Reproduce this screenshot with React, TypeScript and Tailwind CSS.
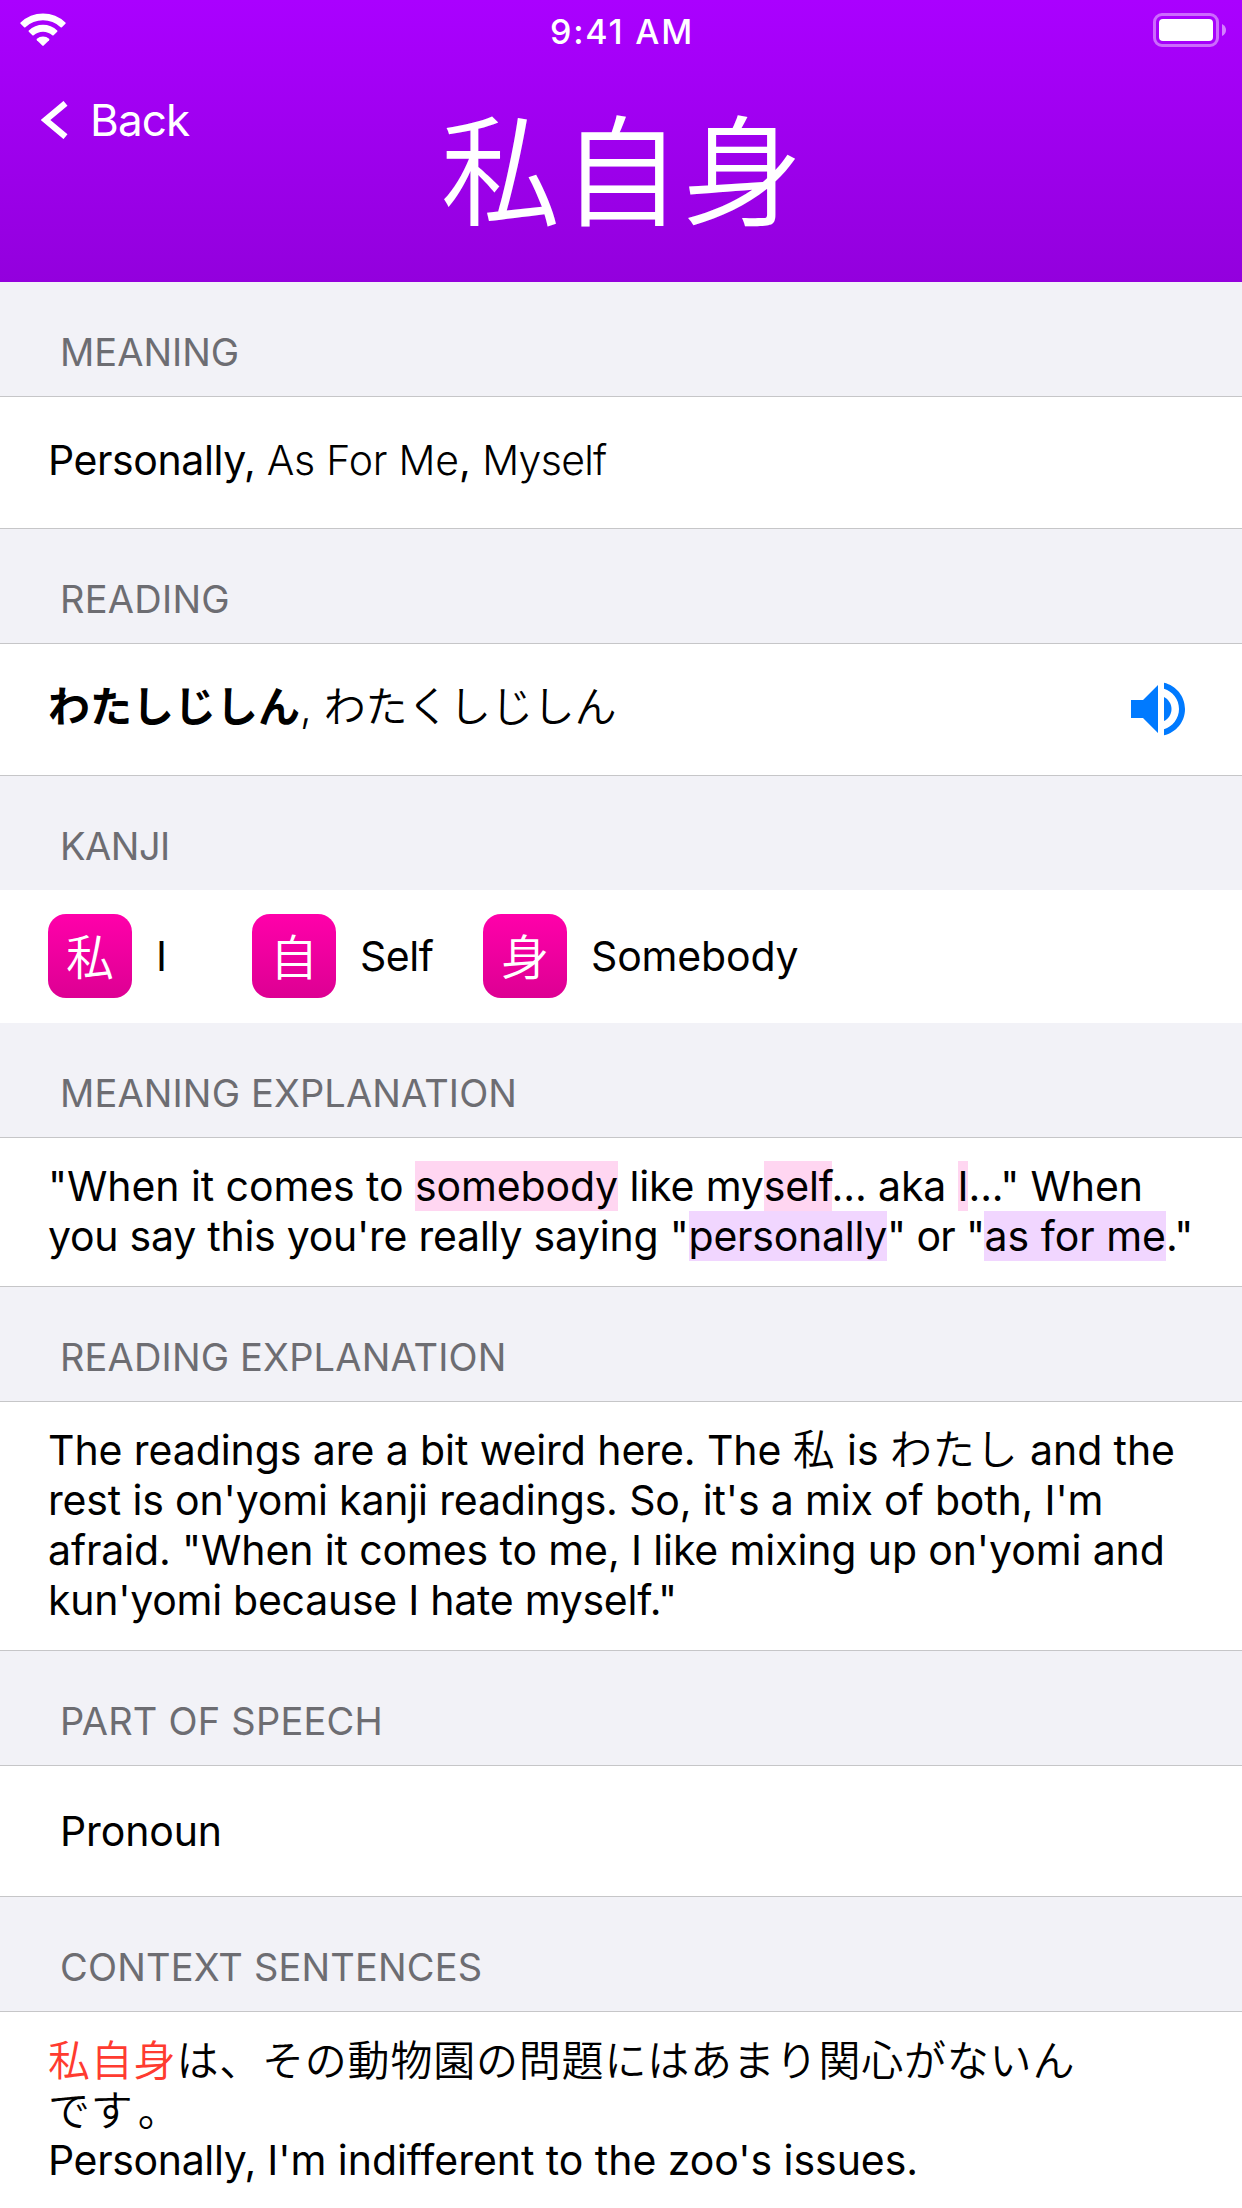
import type { ReactNode } from 'react';

const TEXT_FONT = "font-['Inter','Noto_Sans_CJK_JP_DemiLight','Noto_Sans_CJK_JP',sans-serif]";
const KANJI_FONT = "font-['Noto_Sans_CJK_JP_DemiLight','Noto_Sans_CJK_JP',sans-serif]";

function WifiIcon() {
  return (
    <svg width="46" height="34" viewBox="0 0 46 34" fill="#fff">
      <path d="M0.6 9.6A32 32 0 0 1 45.4 9.6Q46 10.2 45.4 10.8L41.9 14.2Q41.3 14.8 40.6 14.2A25.8 25.8 0 0 0 5.4 14.2Q4.7 14.8 4.1 14.2L0.6 10.8Q0 10.2 0.6 9.6Z" />
      <path d="M8.8 17.6A20.4 20.4 0 0 1 37.2 17.6Q37.8 18.2 37.2 18.8L33.6 22.3Q33 22.9 32.3 22.3A14 14 0 0 0 13.7 22.3Q13 22.9 12.4 22.3L8.8 18.8Q8.2 18.2 8.8 17.6Z" />
      <path d="M16.9 25.8A9.2 9.2 0 0 1 29.1 25.8Q29.8 26.5 29.1 27.2L23.7 32.6Q23 33.2 22.3 32.6L16.9 27.2Q16.2 26.5 16.9 25.8Z" />
    </svg>
  );
}

function BatteryIcon() {
  return (
    <svg width="73" height="34" viewBox="0 0 73 34" fill="none">
      <rect x="1.5" y="1.5" width="63" height="31" rx="7.5" stroke="#fff" strokeOpacity="0.42" strokeWidth="3" />
      <rect x="6" y="6" width="54" height="22" rx="4" fill="#fff" />
      <path d="M69 11Q73 13 73 17T69 23Z" fill="#fff" fillOpacity="0.5" />
    </svg>
  );
}

function ChevronIcon() {
  return (
    <svg width="27" height="38" viewBox="0 0 27 38" fill="none" stroke="#fff" strokeWidth="6.2">
      <path d="M24.5 2.3L4.4 19L24.5 35.7" />
    </svg>
  );
}

function SpeakerIcon() {
  return (
    <svg width="72" height="72" viewBox="0 0 24 24" fill="#007aff">
      <path d="M3 9v6h4l5 5V4L7 9z" />
      <path d="M14 7.970v8.050c1.480-.73 2.500-2.250 2.500-4.020s-1.020-3.290-2.500-4.030z" />
      <path d="M14 3.230v2.060c2.890.86 5 3.540 5 6.710s-2.110 5.850-5 6.710v2.060c4.010-.91 7-4.490 7-8.770s-2.990-7.860-7-8.770z" />
    </svg>
  );
}

function SectionLabel({ children, className }: { children: ReactNode; className: string }) {
  return (
    <h2 className="flex h-[114px] items-end pb-[21px] pl-[60px] text-[38px] leading-[46px] font-normal text-[#6d6d72]">
      <span className={className}>{children}</span>
    </h2>
  );
}

function Row({ children, className }: { children: ReactNode; className: string }) {
  return <div className={`border-y border-[#c6c6c8] bg-white pl-12 ${className}`}>{children}</div>;
}

function Kanji({ char, label, className, labelClass }: { char: string; label: string; className: string; labelClass: string }) {
  return (
    <div className={`flex items-center gap-6 ${className}`}>
      <div className="flex size-[84px] items-center justify-center rounded-[18px] bg-linear-to-b from-[#ff00aa] to-[#dd0093] pb-1">
        <span className={`text-[48px] leading-[48px] text-white ${KANJI_FONT}`}>{char}</span>
      </div>
      <span className={labelClass}>{label}</span>
    </div>
  );
}

const Pink = ({ children }: { children: ReactNode }) => <span className="bg-[#ffd6f1]">{children}</span>;
const Purple = ({ children }: { children: ReactNode }) => <span className="bg-[#f1d6ff]">{children}</span>;

export default function App() {
  return (
    <div className={`h-[2208px] w-[1242px] overflow-hidden bg-[#f2f2f7] text-[41px] leading-[50px] whitespace-nowrap text-black ${TEXT_FONT}`}>
      <header className="h-[282px] bg-linear-to-b from-[#aa00ff] to-[#9300dd] text-white">
        <div className="grid h-[60px] grid-cols-3 items-start">
          <div className="pt-[13px] pl-5">
            <WifiIcon />
          </div>
          <div className="pt-[11px] pl-0.5 text-center text-[34px] leading-[41px] font-[550] tracking-[1.8px]">9:41 AM</div>
          <div className="flex justify-end pt-[13px] pr-4">
            <BatteryIcon />
          </div>
        </div>
        <div className="grid grid-cols-3 items-start">
          <div className="flex items-center gap-[22px] pt-[33px] pl-[41px]">
            <ChevronIcon />
            <span className="text-[44px] leading-[54px] font-normal tracking-[-0.9px]">Back</span>
          </div>
          <h1 className={`pt-[45px] pl-0.5 text-center text-[120px] leading-[120px] font-normal tracking-[1px] ${KANJI_FONT}`}>私自身</h1>
        </div>
      </header>

      <SectionLabel className="tracking-[0px]">MEANING</SectionLabel>
      <Row className="h-[133px] pt-[38px]">
        <span className="tracking-[-0.4px]">Personally, </span>
        <span className="font-light tracking-[-0.2px]">As For Me</span>, <span className="font-light tracking-[-0.7px]">Myself</span>
      </Row>

      <SectionLabel className="tracking-[0.25px]">READING</SectionLabel>
      <Row className="flex h-[133px] justify-between pr-12">
        <div className="pt-[38px] text-[42px]">
          <span className="font-['Inter','Noto_Sans_CJK_JP',sans-serif] font-bold">わたしじしん</span>
          <span className="font-light">, </span>
          <span className="tracking-[-0.2px]">わたくしじしん</span>
        </div>
        <div className="pt-[29px]">
          <SpeakerIcon />
        </div>
      </Row>

      <SectionLabel className="tracking-[-0.5px]">KANJI</SectionLabel>
      <div className="flex h-[133px] items-center bg-white pb-[2px] pl-12">
        <Kanji char="私" label="I" className="w-[204px]" labelClass="" />
        <Kanji char="自" label="Self" className="w-[231px]" labelClass="tracking-[-0.5px]" />
        <Kanji char="身" label="Somebody" className="" labelClass="tracking-[-0.17px]" />
      </div>

      <SectionLabel className="tracking-[0.13px]">MEANING EXPLANATION</SectionLabel>
      <Row className="h-[150px] pt-[23px]">
        <p className="tracking-[-0.13px]">
          <span className="tracking-[-0.08px]">"When it comes to </span>
          <Pink>somebody</Pink> like my<Pink>self</Pink>... aka <Pink>I</Pink>..." When
        </p>
        <p className="tracking-[-0.25px]">
          you say this you're really saying "<Purple>personally</Purple>
          <span className="tracking-[-0.65px]">" or "</span>
          <span className="tracking-[0px]">
            <Purple>as for me</Purple>
          </span>
          ."
        </p>
      </Row>

      <SectionLabel className="tracking-[0.16px]">READING EXPLANATION</SectionLabel>
      <Row className="h-[250px] pt-[23px]">
        <p className="tracking-[-0.08px]">
          The readings are a bit weird here. The <span className="text-[42px] tracking-[0.8px]">私</span> is{' '}
          <span className="text-[42px] tracking-[0.9px]">わたし</span> and the
        </p>
        <p className="tracking-[-0.16px]">rest is on'yomi kanji readings. So, it's a mix of both, I'm</p>
        <p className="tracking-[-0.12px]">afraid. "When it comes to me, I like mixing up on'yomi and</p>
        <p className="tracking-[-0.26px]">kun'yomi because I hate myself."</p>
      </Row>

      <SectionLabel className="tracking-[0.22px]">PART OF SPEECH</SectionLabel>
      <Row className="h-[132px] pt-10">
        <p className="pl-3 tracking-[-0.12px]">Pronoun</p>
      </Row>

      <SectionLabel className="tracking-[0.18px]">CONTEXT SENTENCES</SectionLabel>
      <div className="h-[197px] border-t border-[#c6c6c8] bg-white pt-6 pl-12">
        <p className="text-[42px] tracking-[0.8px]">
          <span className="text-[#ff3b30]">私自身</span>は、その動物園の問題にはあまり関心がないん
        </p>
        <p className="text-[42px] tracking-[0.8px]">
          で<span className="tracking-[5px]">す</span>。
        </p>
        <p className="-mt-px">
          <span className="tracking-[-0.35px]">Personally, </span>
          <span className="tracking-[-0.04px]">I'm indifferent to the zoo's issues.</span>
        </p>
      </div>
    </div>
  );
}
